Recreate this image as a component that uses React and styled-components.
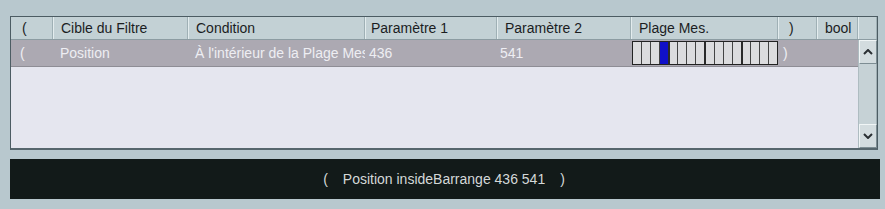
import React from "react";
import styled, { createGlobalStyle } from "styled-components";

const Global = createGlobalStyle`
  html, body { margin: 0; padding: 0; }
  body {
    background: #b8c8ce;
    font-family: "Liberation Sans", Arial, sans-serif;
    width: 885px;
    height: 209px;
    overflow: hidden;
  }
`;

const COLS = "42px 135px 177px 132px 134px 147px 39px 41px 19px";

const Page = styled.div`
  padding: 16px 5px 0 10px;
  display: flex;
  flex-direction: column;
  gap: 9px;
`;

const Frame = styled.div`
  width: 866px;
  border: 1px solid #4c5c63;
  border-bottom: 2px solid #56666d;
  display: flex;
  flex-direction: column;
  background: #e5e6ef;
`;

const HeaderRow = styled.div`
  display: grid;
  grid-template-columns: ${COLS};
  height: 22px;
  background: #c3d1d5;
  border-bottom: 1px solid #8c9ca2;
`;

const HeadCell = styled.div`
  border-left: 1px solid ${(p) => (p.$first ? "transparent" : "#e3ecee")};
  border-right: 1px solid #9fb0b5;
  padding-left: ${(p) => p.$pad || 7}px;
  font-size: 14px;
  line-height: 22px;
  color: #1b1d1f;
  white-space: nowrap;
  overflow: hidden;
`;

const Body = styled.div`
  display: flex;
  height: 108px;
`;

const Rows = styled.div`
  flex: 1;
  display: flex;
  flex-direction: column;
`;

const DataRow = styled.div`
  display: grid;
  grid-template-columns: 42px 135px 177px 132px 134px 147px 39px 41px;
  height: 26px;
  background: #aca9b2;
  border-bottom: 1px solid #8e8d95;
`;

const Cell = styled.div`
  padding-left: ${(p) => p.$pad || 7}px;
  font-size: 14px;
  line-height: 26px;
  color: #eeeef3;
  white-space: nowrap;
  overflow: hidden;
`;

const GridCell = styled.div`
  display: flex;
  align-items: stretch;
  padding: 1px 0 1px 1px;
`;

const MeasureGrid = styled.div`
  display: flex;
  width: 146px;
  height: 24px;
  border: 1px solid #222;
  box-sizing: border-box;
  background: #d8d8dc;
`;

const Measure = styled.div`
  flex: 1;
  background: ${(p) => (p.$on ? "#1010c8" : "#dcdcde")};
  border-right: ${(p) => (p.$bar ? "2px solid #2a2a2a" : "1px solid #444")};
  &:last-child { border-right: none; }
`;

const Scrollbar = styled.div`
  width: 19px;
  display: flex;
  flex-direction: column;
  background: #c7d3d7;
  border-left: 1px solid #aebcc1;
`;

const ScrollButton = styled.div`
  height: 22px;
  display: flex;
  align-items: center;
  justify-content: center;
  background: #d3dcdf;
  border-top: 1px solid #f0f5f6;
  border-left: 1px solid #f0f5f6;
  border-right: 1px solid #7d8d93;
  border-bottom: 1px solid #7d8d93;
`;

const Track = styled.div`
  flex: 1;
  background: #c6d2d6;
  border-right: 1px solid #9eadb2;
`;

const Expression = styled.div`
  width: 870px;
  height: 40px;
  background: #121a19;
  color: #d4d8d8;
  font-size: 14px;
  display: flex;
  align-items: center;
  justify-content: center;
  gap: 15px;
  padding-right: 2px;
  box-sizing: border-box;
`;

const Chevron = ({ up }) => (
  <svg width="10" height="6" viewBox="0 0 10 6">
    <path
      d={up ? "M1 5 L5 1 L9 5" : "M1 1 L5 5 L9 1"}
      fill="none"
      stroke="#2a2f33"
      strokeWidth="2"
    />
  </svg>
);

const headers = [
  { t: "(", pad: 10, first: true },
  { t: "Cible du Filtre" },
  { t: "Condition" },
  { t: "Paramètre 1", pad: 5 },
  { t: "Paramètre 2", pad: 7 },
  { t: "Plage Mes.", pad: 7 },
  { t: ")", pad: 10 },
  { t: "bool", pad: 7 },
  { t: "" },
];

export default function App() {
  const measures = Array.from({ length: 16 }, (_, i) => i);
  return (
    <>
      <Global />
      <Page>
        <Frame>
          <HeaderRow>
            {headers.map((h, i) => (
              <HeadCell key={i} $pad={h.pad} $first={h.first}>
                {h.t}
              </HeadCell>
            ))}
          </HeaderRow>
          <Body>
            <Rows>
              <DataRow>
                <Cell $pad={9}>(</Cell>
                <Cell>Position</Cell>
                <Cell>À l'intérieur de la Plage Mes.</Cell>
                <Cell $pad={4}>436</Cell>
                <Cell $pad={3}>541</Cell>
                <GridCell>
                  <MeasureGrid>
                    {measures.map((m) => (
                      <Measure key={m} $on={m === 3} $bar={m % 4 === 3} />
                    ))}
                  </MeasureGrid>
                </GridCell>
                <Cell $pad={5}>)</Cell>
                <Cell />
              </DataRow>
            </Rows>
            <Scrollbar>
              <ScrollButton>
                <Chevron up />
              </ScrollButton>
              <Track />
              <ScrollButton>
                <Chevron />
              </ScrollButton>
            </Scrollbar>
          </Body>
        </Frame>
        <Expression>
          <span>(</span>
          <span>Position insideBarrange 436 541</span>
          <span>)</span>
        </Expression>
      </Page>
    </>
  );
}
